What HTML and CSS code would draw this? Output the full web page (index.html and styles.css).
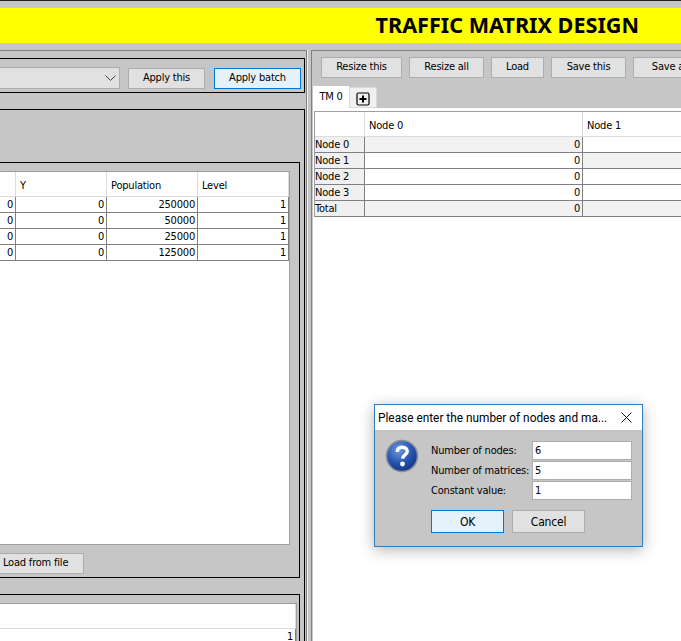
FILE: index.html
```html
<!DOCTYPE html>
<html lang="en">
<head>
    <meta charset="UTF-8">
    <meta name="viewport" content="width=device-width, initial-scale=1.0">
    <title>Traffic Matrix Design</title>
    <link rel="stylesheet" href="styles.css">
</head>
<body>
    <div class="banner">TRAFFIC MATRIX DESIGN</div>

    <div class="workspace">
        <div class="left-pane">
            <div class="box batch-box">
                <div class="combo">
                    <svg class="combo-arrow" width="11" height="6" viewBox="0 0 11 6"><path d="M0.5 0.5 L5.5 5.5 L10.5 0.5" fill="none" stroke="#444" stroke-width="1"/></svg>
                </div>
                <button class="btn btn-this">Apply this</button>
                <button class="btn btn-batch btn-focus">Apply batch</button>
            </div>

            <div class="box outer-box">
                <div class="box nodes-box">
                    <div class="grid-wrap nodes-wrap">
                        <table class="grid nodes-grid">
                            <colgroup>
                                <col class="col-first"><col class="col-num"><col class="col-num"><col class="col-num">
                            </colgroup>
                            <thead>
                                <tr><th></th><th>Y</th><th>Population</th><th>Level</th></tr>
                            </thead>
                            <tbody>
                                <tr><td>0</td><td>0</td><td>250000</td><td>1</td></tr>
                                <tr><td>0</td><td>0</td><td>50000</td><td>1</td></tr>
                                <tr><td>0</td><td>0</td><td>25000</td><td>1</td></tr>
                                <tr><td>0</td><td>0</td><td>125000</td><td>1</td></tr>
                            </tbody>
                        </table>
                    </div>
                    <div class="load-row">
                        <button class="btn btn-load-file">Load from file</button>
                    </div>
                </div>

                <div class="box links-box">
                    <div class="grid-wrap links-wrap">
                        <table class="grid grid-full">
                            <thead>
                                <tr><th></th></tr>
                            </thead>
                            <tbody>
                                <tr><td>1</td></tr>
                            </tbody>
                        </table>
                    </div>
                </div>
            </div>
        </div>

        <div class="splitter"></div>

        <div class="right-pane">
            <div class="toolbar">
                <button class="btn btn-resize-this">Resize this</button>
                <button class="btn btn-resize-all">Resize all</button>
                <button class="btn btn-load">Load</button>
                <button class="btn btn-save-this">Save this</button>
                <button class="btn btn-save-all">Save all</button>
            </div>

            <div class="tabs">
                <div class="tab tab-active">TM 0</div>
                <div class="tab tab-add">
                    <svg width="14" height="14" viewBox="0 0 14 14"><rect x="1" y="1" width="12" height="12" rx="1.5" fill="none" stroke="#000" stroke-width="1.2"/><path d="M7 3.5 V10.5 M3.5 7 H10.5" stroke="#000" stroke-width="2"/></svg>
                </div>
            </div>

            <div class="tab-page">
                <table class="grid matrix">
                    <colgroup>
                        <col class="col-label"><col class="col-node"><col class="col-node">
                    </colgroup>
                    <thead>
                        <tr><th></th><th>Node 0</th><th>Node 1</th></tr>
                    </thead>
                    <tbody>
                        <tr><th class="row-head">Node 0</th><td class="shade">0</td><td></td></tr>
                        <tr><th class="row-head">Node 1</th><td>0</td><td class="shade"></td></tr>
                        <tr><th class="row-head">Node 2</th><td>0</td><td></td></tr>
                        <tr><th class="row-head">Node 3</th><td>0</td><td></td></tr>
                        <tr class="total"><th class="row-head">Total</th><td>0</td><td></td></tr>
                    </tbody>
                </table>
            </div>
        </div>
    </div>

    <div class="dialog">
        <div class="dialog-title">
            <span>Please enter the number of nodes and ma...</span>
            <svg class="dialog-close" width="11" height="11" viewBox="0 0 11 11"><path d="M0.5 0.5 L10.5 10.5 M10.5 0.5 L0.5 10.5" stroke="#111" stroke-width="1"/></svg>
        </div>
        <div class="dialog-body">
            <svg class="dialog-icon" width="34" height="34" viewBox="0 0 34 34">
                <defs>
                    <radialGradient id="ball" cx="0.4" cy="0.3" r="0.8">
                        <stop offset="0" stop-color="#6f9be0"/>
                        <stop offset="0.55" stop-color="#2452ad"/>
                        <stop offset="1" stop-color="#122f7c"/>
                    </radialGradient>
                </defs>
                <circle cx="17" cy="17" r="15.5" fill="url(#ball)" stroke="#8a8f9c" stroke-width="1.6"/>
                <path d="M12.2 12.8 C12.4 9.6 14.6 8.2 17.2 8.2 C20.2 8.2 22.2 10 22.2 12.4 C22.2 15.6 18 16 17.6 19.6" fill="none" stroke="#fff" stroke-width="3.4"/>
                <circle cx="17.5" cy="25" r="2.4" fill="#fff"/>
            </svg>
            <div class="dialog-form">
                <div class="field"><label for="nodes">Number of nodes:</label><input id="nodes" type="text" value="6"></div>
                <div class="field"><label for="matrices">Number of matrices:</label><input id="matrices" type="text" value="5"></div>
                <div class="field"><label for="constant">Constant value:</label><input id="constant" type="text" value="1"></div>
                <div class="dialog-buttons">
                    <button class="btn btn-dialog btn-focus">OK</button>
                    <button class="btn btn-dialog">Cancel</button>
                </div>
            </div>
        </div>
    </div>
</body>
</html>
```

FILE: styles.css
```css
* {
    box-sizing: border-box;
}

html, body {
    height: 641px;
}

body {
    margin: 0;
    overflow: hidden;
    position: relative;
    background-color: #c6c6c6;
    border-top: 1px solid #222;
    padding-top: 7px;
    font-family: "DejaVu Sans Condensed", "DejaVu Sans", sans-serif;
    font-stretch: condensed;
    font-size: 11px;
    letter-spacing: -0.2px;
    color: #000;
}

.banner {
    height: 35px;
    background-color: #ffff00;
    font-family: "Noto Sans", sans-serif;
    font-stretch: normal;
    font-size: 21.6px;
    font-weight: bold;
    letter-spacing: 0;
    line-height: 34px;
    text-align: right;
    padding-right: 42px;
}

.workspace {
    display: flex;
    height: 591px;
    margin-top: 7px;
}

.left-pane {
    flex: none;
    width: 427px;
    margin-left: -120px;
    padding: 7px 1px 0 0;
    border-top: 1px solid #808080;
    border-right: 1px solid #808080;
    display: flex;
    flex-direction: column;
}

.splitter {
    flex: none;
    width: 4px;
    border-left: 1px solid #f2f2f2;
}

.box {
    border: 1px solid #000;
}

.batch-box {
    flex: none;
    height: 35px;
    display: flex;
    align-items: flex-start;
    justify-content: flex-end;
    padding: 9px 3px 0 0;
}

.combo {
    flex: 1;
    height: 22px;
    margin: -1px 8px 0 0;
    background-color: #e1e1e1;
    border: 1px solid #adadad;
    display: flex;
    align-items: center;
    justify-content: flex-end;
    padding-right: 3px;
}

.combo-arrow {
    display: block;
}

.btn {
    height: 21px;
    padding: 0 0 2px 0;
    background-color: #e1e1e1;
    border: 1px solid #adadad;
    font-family: inherit;
    font-stretch: inherit;
    font-size: inherit;
    letter-spacing: inherit;
    color: #000;
}

.btn-focus {
    background-color: #e5f1fb;
    border-color: #0078d7;
}

.btn-this { width: 77px; margin-right: 9px; }
.btn-batch { width: 87px; }

.outer-box {
    flex: 1;
    min-height: 0;
    margin-top: 16px;
    padding: 52px 4px 0 9px;
    border-bottom: none;
    display: flex;
    flex-direction: column;
}

.nodes-box {
    flex: none;
    height: 416px;
    padding: 8px 9px 0 9px;
    display: flex;
    flex-direction: column;
}

.grid-wrap {
    border: 1px solid #a0a0a0;
    background-color: #fff;
}

.nodes-wrap {
    height: 374px;
}

.load-row {
    margin-top: 8px;
    display: flex;
    justify-content: flex-end;
    padding-right: 206px;
}

.btn-load-file {
    width: 86px;
    text-align: left;
    padding-left: 4px;
}

.links-box {
    flex: 1 1 0;
    min-height: 0;
    margin-top: 16px;
    padding: 8px 2px 0 9px;
    border-bottom: none;
    display: flex;
    flex-direction: column;
}

.links-wrap {
    flex: 1 1 0;
    min-height: 0;
    overflow: hidden;
    border-bottom: none;
}

.grid {
    border-collapse: separate;
    border-spacing: 0;
    table-layout: fixed;
}

.grid-full {
    width: 100%;
}

.nodes-grid {
    width: 388px;
}

.col-first { width: 115px; }
.col-num { width: 91px; }
.col-label { width: 50px; }
.col-node { width: 218px; }

.grid th {
    height: 25px;
    padding: 2px 0 0 4px;
    font-weight: normal;
    text-align: left;
    background-color: #fff;
    border-right: 1px solid #dcdcdc;
    border-bottom: 1px solid #dcdcdc;
}

.grid td {
    height: 16px;
    padding: 0 2px 0 0;
    line-height: 15px;
    text-align: right;
    background-color: #fff;
    border-right: 1px solid #808080;
    border-bottom: 1px solid #808080;
}

.right-pane {
    flex: 1;
    min-width: 0;
    border-top: 1px solid #808080;
    border-left: 1px solid #808080;
    padding-top: 6px;
    display: flex;
    flex-direction: column;
}

.toolbar {
    display: flex;
    gap: 7px;
    padding-left: 9px;
}

.toolbar .btn {
    flex: none;
}

.btn-resize-this { width: 81px; }
.btn-resize-all { width: 75px; }
.btn-load { width: 53px; }
.btn-save-this { width: 75px; }
.btn-save-all { width: 75px; }

.tabs {
    display: flex;
    align-items: flex-end;
    height: 22px;
    margin-top: 8px;
    padding-left: 1px;
}

.tab {
    display: flex;
    align-items: center;
    justify-content: center;
}

.tab-active {
    width: 36px;
    height: 22px;
    background-color: #fff;
    padding-bottom: 2px;
}

.tab-add {
    width: 28px;
    height: 21px;
    background-color: #f0f0f0;
    border: 1px solid #d9d9d9;
    padding-top: 2px;
}

.tab-page {
    flex: 1;
    margin-left: 1px;
    padding: 3px 0 0 1px;
    background-color: #fff;
}

.matrix {
    width: 487px;
    border-top: 1px solid #a0a0a0;
    border-left: 1px solid #a0a0a0;
}

.matrix th.row-head {
    height: 16px;
    padding: 0;
    line-height: 15px;
    background-color: #f0f0f0;
    border-right: 1px solid #808080;
    border-bottom: 1px solid #808080;
}

.matrix td.shade,
.matrix .total td {
    background-color: #f2f2f2;
}

.dialog {
    position: absolute;
    left: 374px;
    top: 403px;
    width: 269px;
    height: 143px;
    background-color: #c6c6c6;
    border: 1px solid #2b7fc3;
    box-shadow: 0 3px 14px rgba(0, 0, 0, 0.3);
}

.dialog-title {
    height: 25px;
    background-color: #fff;
    padding: 0 10px 0 3px;
    display: flex;
    align-items: center;
    justify-content: space-between;
    font-family: "Roboto", sans-serif;
    font-stretch: normal;
    font-size: 11.85px;
    letter-spacing: 0;
}

.dialog-body {
    display: flex;
    padding: 10px 0 0 10px;
}

.dialog-icon {
    flex: none;
    margin-top: -1px;
}

.dialog-form {
    margin-left: 12px;
    width: 201px;
}

.field {
    display: flex;
    align-items: center;
    height: 20px;
}

.field label {
    width: 101px;
    white-space: nowrap;
}

.field input {
    width: 100px;
    height: 19px;
    padding: 0 0 0 2px;
    background-color: #fff;
    border: 1px solid #adadad;
    font-family: inherit;
    font-stretch: inherit;
    font-size: inherit;
    letter-spacing: inherit;
    color: #000;
}

.dialog-buttons {
    display: flex;
    gap: 8px;
    margin-top: 10px;
}

.btn-dialog {
    width: 73px;
    height: 23px;
    padding-bottom: 0;
    font-size: 12px;
}
```
